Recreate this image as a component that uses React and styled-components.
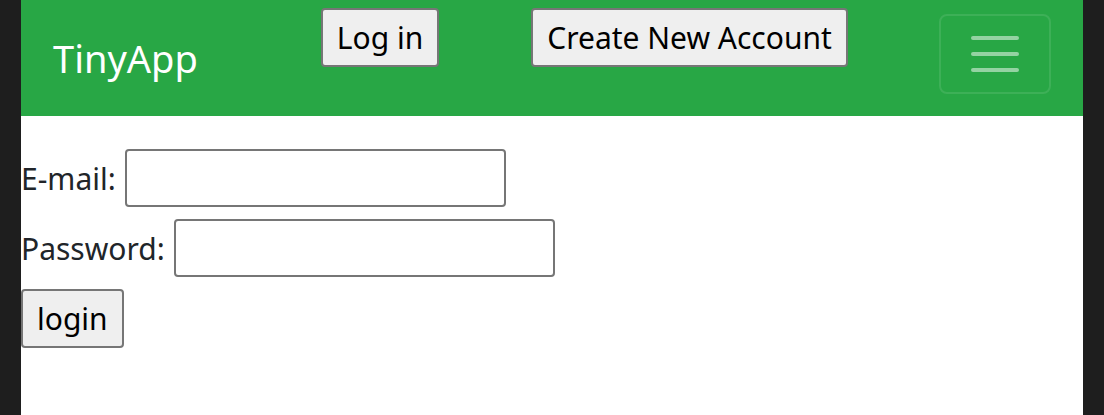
import React from 'react'
import styled, { createGlobalStyle } from 'styled-components'

const Global = createGlobalStyle`
  html, body {
    margin: 0;
    padding: 0;
    background: #1e1e1e;
  }
  body {
    font-family: "Noto Sans", "Open Sans", sans-serif;
    color: #212529;
  }
`

const Page = styled.div`
  width: 1062px;
  min-height: 100vh;
  margin: 0 auto;
  background: #fff;
  font-size: 30px;
`

const Navbar = styled.nav`
  display: flex;
  align-items: flex-start;
  height: 116px;
  padding: 0 32px;
  box-sizing: border-box;
  background: #28a745;
`

const Brand = styled.a`
  align-self: center;
  color: #fff;
  font-size: 38px;
  line-height: 60px;
  text-decoration: none;
  margin-right: 123px;
`

const Actions = styled.div`
  display: flex;
  gap: 92px;
  margin-top: 8px;
`

const Button = styled.button`
  font-family: inherit;
  font-size: 30px;
  line-height: 1.5;
  color: #000;
  background: #efefef;
  border: 2px solid #767676;
  border-radius: 4px;
  padding: 3px 14px;
  height: 59px;
  box-sizing: border-box;
  cursor: pointer;
`

const Toggler = styled.button`
  margin-top: 14px;
  margin-left: auto;
  width: 112px;
  height: 80px;
  box-sizing: border-box;
  padding: 8px 24px;
  background: transparent;
  border: 2px solid rgba(255, 255, 255, 0.1);
  border-radius: 8px;
  display: flex;
  align-items: center;
  justify-content: center;
`

const Form = styled.form`
  display: flex;
  flex-direction: column;
  align-items: flex-start;
  gap: 12px;
  padding-top: 33px;
`

const Row = styled.div`
  display: flex;
  align-items: center;
  gap: 9px;
  line-height: 1.5;
`

const Input = styled.input`
  width: 381px;
  height: 58px;
  box-sizing: border-box;
  border: 2px solid #767676;
  border-radius: 4px;
  font-size: 26px;
  padding: 2px 4px;
`

export default function App() {
  return (
    <Page>
      <Global />
      <Navbar>
        <Brand href="#">TinyApp</Brand>
        <Actions>
          <Button>Log in</Button>
          <Button>Create New Account</Button>
        </Actions>
        <Toggler aria-label="menu">
          <svg width="60" height="60" viewBox="0 0 30 30">
            <path
              d="M4 7h22M4 15h22M4 23h22"
              stroke="rgba(255,255,255,0.5)"
              strokeWidth="2"
              strokeLinecap="round"
            />
          </svg>
        </Toggler>
      </Navbar>
      <Form onSubmit={(e) => e.preventDefault()}>
        <Row>
          <label>E-mail:</label>
          <Input type="email" />
        </Row>
        <Row>
          <label>Password:</label>
          <Input type="password" />
        </Row>
        <Button type="submit">login</Button>
      </Form>
    </Page>
  )
}
